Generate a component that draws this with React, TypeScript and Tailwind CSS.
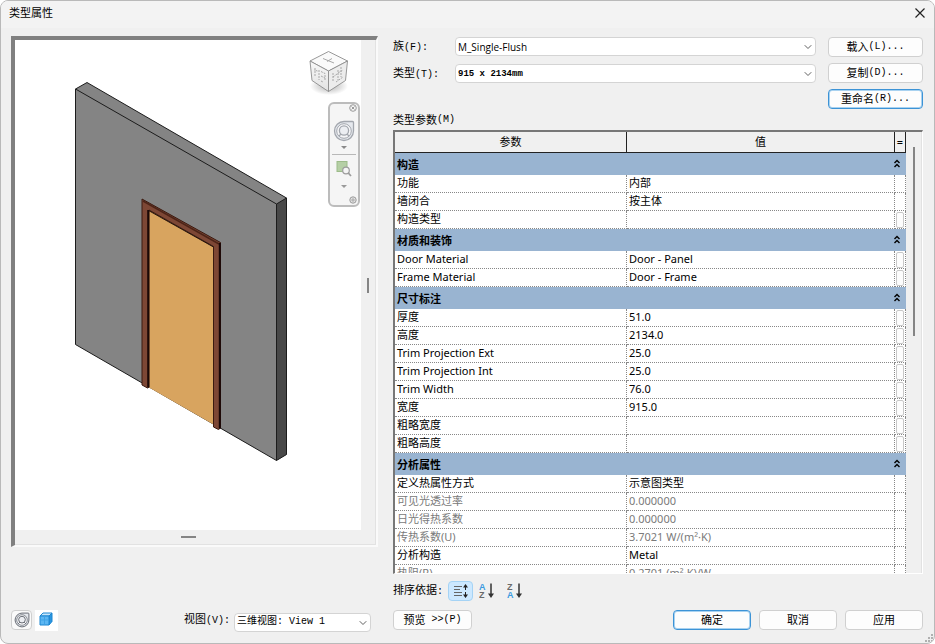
import React from 'react';
import { ChevronDown } from 'lucide-react';

type Row = { name: string; value: string; browse?: boolean; muted?: boolean };
type Group = { title: string; rows: Row[] };

const groups: Group[] = [
  {
    title: '构造',
    rows: [
      { name: '功能', value: '内部' },
      { name: '墙闭合', value: '按主体' },
      { name: '构造类型', value: '', browse: true },
    ],
  },
  {
    title: '材质和装饰',
    rows: [
      { name: 'Door Material', value: 'Door - Panel', browse: true },
      { name: 'Frame Material', value: 'Door - Frame', browse: true },
    ],
  },
  {
    title: '尺寸标注',
    rows: [
      { name: '厚度', value: '51.0', browse: true },
      { name: '高度', value: '2134.0', browse: true },
      { name: 'Trim Projection Ext', value: '25.0', browse: true },
      { name: 'Trim Projection Int', value: '25.0', browse: true },
      { name: 'Trim Width', value: '76.0', browse: true },
      { name: '宽度', value: '915.0', browse: true },
      { name: '粗略宽度', value: '', browse: true },
      { name: '粗略高度', value: '', browse: true },
    ],
  },
  {
    title: '分析属性',
    rows: [
      { name: '定义热属性方式', value: '示意图类型' },
      { name: '可见光透过率', value: '0.000000', muted: true },
      { name: '日光得热系数', value: '0.000000', muted: true },
      { name: '传热系数(U)', value: '3.7021 W/(m²·K)', muted: true },
      { name: '分析构造', value: 'Metal' },
      { name: '热阻(R)', value: '0.2701 (m²·K)/W', muted: true },
    ],
  },
];

function Mono({ children }: { children: React.ReactNode }) {
  return <span className="font-['Liberation_Mono',monospace] text-[10px]">{children}</span>;
}

function PushButton({
  children,
  primary = false,
  className = '',
}: {
  children: React.ReactNode;
  primary?: boolean;
  className?: string;
}) {
  const edge = primary ? 'border-[#3c93d6] shadow-[inset_0_0_0_1px_#a9d2f0]' : 'border-[#d0d0d0]';
  return (
    <button
      type="button"
      className={`flex h-5 items-center justify-center whitespace-pre rounded border bg-[#fdfdfd] leading-4 ${edge} ${className}`}
    >
      {children}
    </button>
  );
}

function SelectBox({
  id,
  value,
  className,
  textClass,
}: {
  id: string;
  value: string;
  className: string;
  textClass: string;
}) {
  return (
    <div className={`relative ${className}`}>
      <select
        id={id}
        defaultValue={value}
        className={`block h-[19px] w-full appearance-none rounded-sm border border-[#d4d4d4] bg-white pr-5 pl-0.5 leading-4 ${textClass}`}
      >
        <option value={value}>{value}</option>
      </select>
      <ChevronDown
        className="pointer-events-none absolute top-1 right-0.5 size-3 text-[#606060]"
        strokeWidth={2}
      />
    </div>
  );
}

function CollapseIcon() {
  return (
    <svg viewBox="0 0 8 9" className="h-[9px] w-2" fill="none" stroke="#000" strokeWidth="1.4">
      <path d="M1.500 4 4 1.500 6.500 4M1.500 8 4 5.500 6.500 8" />
    </svg>
  );
}

function WheelIcon({ className, stroke }: { className: string; stroke: string }) {
  return (
    <svg viewBox="0 0 22 22" className={className} fill="none" stroke={stroke} strokeWidth="1.3">
      <path d="M11 1.5H19.5Q20.5 1.5 20.5 2.5V11A9.5 9.5 0 1 1 11 1.5Z" fill="#e6e9ee" />
      <circle cx="11" cy="11" r="7.300" fill="#f6f6f8" strokeWidth="1" />
      <circle cx="11" cy="10.5" r="4.6" fill="#eceef2" />
      <path d="M8 14 5.8 16.2M14 14 16.2 16.2" />
    </svg>
  );
}

function DoorScene() {
  return (
    <svg viewBox="15 40 346 490" width="346" height="490" role="img" aria-label="三维预览">
      <defs>
        <linearGradient id="cubeLeft" x1="0" y1="0" x2="0" y2="1">
          <stop offset="0" stopColor="#f8f8f8" />
          <stop offset="1" stopColor="#e2e2e2" />
        </linearGradient>
        <radialGradient id="cubeShadow">
          <stop offset="0" stopColor="#b0b0b0" />
          <stop offset="1" stopColor="#ffffff" />
        </radialGradient>
      </defs>
      <g strokeLinejoin="round">
        <path d="M75.5 89 87 82.5 286.5 198V454.5L276.5 460.5 75.5 344.5Z" fill="#848484" />
        <path d="M276.5 204 286.5 198V454.5L276.5 460.5Z" fill="#484848" />
        <path
          d="M75.5 89 87 82.5 286.5 198V454.5L276.5 460.5 75.5 344.5ZM75.5 89 276.5 204V460.5M276.5 204 286.5 198"
          fill="none"
          stroke="#1c1c1c"
          strokeWidth="1"
        />
        <path d="M149 210.5 213.5 247V424.5L149 387.500Z" fill="#d8a45f" />
        <path
          d="M142 199 220.5 242.5V428L218.5 429.5 213.5 427V246.500L149 210V387L147.500 388 142 385Z"
          fill="#7d4735"
          stroke="#3a1a10"
          strokeWidth="1"
        />
        <path d="M148.5 210.500 213.500 247" stroke="#2a160c" strokeWidth="1" />
        <path d="M148.2 210V387.5" stroke="#1b0807" strokeWidth="2" />
        <path d="M143 201 219 244" stroke="#4d2418" strokeWidth="1.5" />
        <path d="M219.8 243V428.5" stroke="#180606" strokeWidth="2" />
      </g>
      <ellipse cx="329" cy="86" rx="19" ry="9" fill="url(#cubeShadow)" />
      <g stroke="#8c8c8c" strokeWidth="0.9" strokeLinejoin="round">
        <path d="M310 61 328.5 51.5 347.5 61 328.5 71Z" fill="#fafafa" />
        <path d="M310 61 328.5 71V91.5L312 80.5Z" fill="url(#cubeLeft)" />
        <path d="M347.5 61 328.5 71V91.5L345.5 80.5Z" fill="#ececec" />
      </g>
      <g stroke="#a8a8a8" strokeWidth="1" fill="none">
        <path d="M323 58.5 334 63M327 61.5 332 58.5" />
        <path d="M315 68V77M317.500 71 314 70M319 70V80M321 71.500 325 73.500V81M321 76 325 78M321 81 323 82" strokeDasharray="2 1" />
        <path d="M333 73V82M333 77 337 74M338 70V80M341 67V77M338 73 343 70M336 82 343 77" strokeDasharray="2 1" />
      </g>
    </svg>
  );
}

function NavigationBar() {
  return (
    <div className="absolute top-[62px] left-[313px] flex h-[105px] w-8 flex-col items-center rounded-md border-2 border-[#bcbcbc] bg-[#f5f5f5]">
      <button type="button" aria-label="关闭导航栏" className="mr-px flex h-2 items-center self-end">
        <svg viewBox="0 0 8 8" className="size-2" fill="none" stroke="#9a9a9a" strokeWidth="1">
          <circle cx="4" cy="4" r="3.300" />
          <path d="M2.500 2.500 5.500 5.500M5.500 2.500 2.500 5.500" />
        </svg>
      </button>
      <button type="button" aria-label="控制盘" className="mt-2">
        <WheelIcon className="size-[22px]" stroke="#a3a7ae" />
      </button>
      <svg viewBox="0 0 6 4" className="mt-1 h-1 w-1.5" fill="#8a8a8a">
        <path d="M0 0H6L3 3Z" />
      </svg>
      <div className="mt-1 h-px w-6 bg-[#b8b8b8]" />
      <button type="button" aria-label="缩放" className="mt-1.5">
        <svg viewBox="0 0 16 16" className="size-4" fill="none">
          <rect x="1" y="0.500" width="10" height="10" fill="#b5cfa5" stroke="#9cbb89" />
          <circle cx="10" cy="9.500" r="3.300" fill="#f5f5f5" stroke="#9c9c9c" strokeWidth="1.200" />
          <path d="M12.300 12 15 15" stroke="#9c9c9c" strokeWidth="1.800" />
        </svg>
      </button>
      <svg viewBox="0 0 6 4" className="mt-2 h-1 w-1.5" fill="#9a9a9a">
        <path d="M0 0H6L3 3Z" />
      </svg>
      <svg viewBox="0 0 8 8" className="mt-auto mr-px mb-px size-2 self-end" fill="#e4e4e4" stroke="#9a9a9a">
        <circle cx="4" cy="4" r="3.200" />
        <path d="M3 3H5V5H3Z" fill="none" strokeWidth="0.700" />
      </svg>
    </div>
  );
}

function PreviewPane() {
  return (
    <section className="flex w-[367px] shrink-0 flex-col">
      <div className="mb-[61px] flex min-h-0 flex-1 border-t-4 border-r-2 border-b-2 border-l-4 border-t-[#808080] border-r-[#fafafa] border-b-[#fafafa] border-l-[#808080]">
        <div className="flex min-w-0 flex-1 flex-col border-r border-b border-[#e2e2e2]">
          <div className="flex min-h-0 flex-1">
            <div className="relative min-w-0 flex-1 overflow-hidden bg-white">
              <DoorScene />
              <NavigationBar />
            </div>
            <div className="flex w-3.5 items-center justify-center">
              <div className="h-[15px] w-0.5 bg-[#858585]" />
            </div>
          </div>
          <div className="flex h-3.5 items-center justify-center pr-3.5">
            <div className="h-0.5 w-[15px] bg-[#858585]" />
          </div>
        </div>
      </div>
      <div className="flex h-6 items-center">
        <button
          type="button"
          aria-label="控制盘"
          className="flex h-5 w-[21px] items-center justify-center rounded border border-[#cfcfcf] bg-[#fafafa]"
        >
          <WheelIcon className="size-4" stroke="#62676f" />
        </button>
        <button type="button" aria-label="视觉样式" className="ml-[3px] flex h-[21px] w-[23px] items-center justify-center bg-white pr-0.5 pb-0.5">
          <svg viewBox="0 0 14 14" className="size-3.5" stroke="#1c86d1" strokeWidth="1" strokeLinejoin="round">
            <path d="M1 4 4 1H13L10 4Z" fill="#c6e6fb" />
            <path d="M10 4 13 1V9.500L10 13Z" fill="#2b95e0" />
            <path d="M1 4H10V13H1Z" fill="#5cb6f2" />
            <path d="M1.500 8H9.500M5.500 4.500V12.500" stroke="#3fa3e6" />
          </svg>
        </button>
        <label htmlFor="view" className="ml-auto w-[50px]">
          视图<Mono>(V):</Mono>
        </label>
        <SelectBox
          id="view"
          value="三维视图: View 1"
          className="mt-1 mr-[7px] w-[137px]"
          textClass="font-['Liberation_Mono','Noto_Sans_CJK_SC',monospace] text-[10px]"
        />
      </div>
    </section>
  );
}

const cell = 'h-[18px] border-r border-b border-dotted border-[#888] p-0';

function ParameterTable() {
  return (
    <div className="flex min-h-0 flex-1 overflow-hidden border-t-2 border-r border-b border-l-2 border-t-[#777] border-r-[#fff] border-b-[#fff] border-l-[#777]">
      <div className="min-w-0 flex-1 overflow-hidden">
        <table aria-labelledby="params-label" className="w-full table-fixed border-separate border-spacing-0 bg-white">
          <colgroup>
            <col className="w-[232px]" />
            <col />
            <col className="w-[11px]" />
          </colgroup>
          <thead>
            <tr className="h-[21px] bg-[#f0f0f0]">
              <th className="border-r border-b border-[#222] p-0 font-normal">参数</th>
              <th className="border-r border-b border-[#222] p-0 font-normal">值</th>
              <th className="border-r border-b border-[#222] p-0 font-normal">=</th>
            </tr>
          </thead>
          {groups.map((group) => (
            <tbody key={group.title}>
              <tr className="h-[22px] bg-[#99b4d1]">
                <th colSpan={3} className="p-0 pr-[5px] pl-0.5 text-left font-bold">
                  <div className="flex h-[22px] items-center justify-between pt-0.5">
                    {group.title}
                    <button type="button" aria-label={`折叠${group.title}`} className="mb-1">
                      <CollapseIcon />
                    </button>
                  </div>
                </th>
              </tr>
              {group.rows.map((row) => (
                <tr key={row.name} className={row.muted ? 'text-[#7a7a7a]' : ''}>
                  <td className={`${cell} pb-0.5 pl-0.5 leading-[14px] whitespace-nowrap`}>{row.name}</td>
                  <td className={`${cell} pb-0.5 pl-0.5 leading-[14px] whitespace-nowrap`}>{row.value}</td>
                  <td className={cell}>
                    {row.browse && (
                      <button
                        type="button"
                        aria-label={`浏览${row.name}`}
                        className="ml-px block h-4 w-2 rounded-xs border border-[#c8c8c8] bg-[#fdfdfd]"
                      />
                    )}
                  </td>
                </tr>
              ))}
            </tbody>
          ))}
        </table>
      </div>
      <div className="flex w-4 justify-center border-r border-[#e2e2e2] pt-[15px]">
        <div className="h-[189px] w-0.5 bg-[#858585]" />
      </div>
    </div>
  );
}

function SortIcon({ top, bottom, blueTop }: { top: string; bottom: string; blueTop: boolean }) {
  return (
    <svg viewBox="0 0 16 18" className="h-[18px] w-4">
      <g className="font-['Liberation_Sans',sans-serif] text-[9px] font-bold">
        <text x="0" y="8" fill={blueTop ? '#3b9be0' : '#6a6a6a'}>{top}</text>
        <text x="0" y="16" fill={blueTop ? '#6a6a6a' : '#3b9be0'}>{bottom}</text>
      </g>
      <path d="M12 1.500V13" stroke="#333" strokeWidth="1.500" />
      <path d="M9 11.500H15L12 16Z" fill="#333" />
    </svg>
  );
}

export default function App() {
  return (
    <main className="relative flex h-screen min-h-[400px] flex-col overflow-hidden rounded-lg border border-[#b9b9b9] bg-[#f0f0f0] font-['Noto_Sans','Noto_Sans_CJK_SC',sans-serif] text-[11px] leading-4 text-black">
      <header className="flex h-[27px] shrink-0 items-center justify-between bg-[#f3f3f3] px-2 pb-[3px]">
        <h1>类型属性</h1>
        <button type="button" aria-label="关闭" className="size-3">
          <svg viewBox="0 0 12 12" className="size-3" stroke="#222" strokeWidth="1.200">
            <path d="M1.500 1.500 10.500 10.500M10.500 1.500 1.500 10.500" />
          </svg>
        </button>
      </header>

      <div className="flex min-h-0 flex-1 gap-[15px] pt-2 pr-[11px] pb-[11px] pl-2.5">
        <PreviewPane />

        <section className="flex min-w-0 flex-1 flex-col">
          <div className="flex gap-3 pt-px">
            <div className="flex min-w-0 flex-1 flex-col gap-2">
              <div className="flex items-center">
                <label htmlFor="family" className="w-[62px]">
                  族<Mono>(F):</Mono>
                </label>
                <SelectBox id="family" value="M_Single-Flush" className="flex-1" textClass="font-['Open_Sans',sans-serif] text-[10px]" />
              </div>
              <div className="flex items-center">
                <label htmlFor="type" className="w-[62px]">
                  类型<Mono>(T):</Mono>
                </label>
                <SelectBox
                  id="type"
                  value="915 x 2134mm"
                  className="flex-1"
                  textClass="font-['Liberation_Mono',monospace] text-[9px] font-bold"
                />
              </div>
            </div>
            <div className="flex w-[95px] flex-col gap-1.5">
              <PushButton>载入<Mono>(L)...</Mono></PushButton>
              <PushButton>复制<Mono>(D)...</Mono></PushButton>
              <PushButton primary>重命名<Mono>(R)...</Mono></PushButton>
            </div>
          </div>

          <h2 id="params-label" className="flex h-[21px] items-center">
            类型参数<Mono>(M)</Mono>
          </h2>
          <ParameterTable />

          <div className="flex h-[34px] shrink-0 items-center">
            <span className="w-[55px]">
              排序依据<Mono>:</Mono>
            </span>
            <button
              type="button"
              aria-label="默认顺序"
              className="flex h-5 w-[25px] items-center justify-center rounded-sm border border-[#a5d3f5] bg-[#cce8ff]"
            >
              <svg viewBox="0 0 16 16" className="size-4" fill="none" stroke="#666" strokeWidth="1">
                <path d="M1 3.500H9M1 6.500H7M1 9.500H9M1 12.500H9" />
                <path d="M12.500 2V7M12.500 9V14" stroke="#222" />
                <path d="M10 4.500 12.500 1 15 4.500ZM10 11.500 12.500 15 15 11.500Z" fill="#222" stroke="none" />
              </svg>
            </button>
            <button type="button" aria-label="升序" className="ml-1.5">
              <SortIcon top="A" bottom="Z" blueTop />
            </button>
            <button type="button" aria-label="降序" className="ml-3">
              <SortIcon top="Z" bottom="A" blueTop={false} />
            </button>
          </div>

          <div className="flex h-6 shrink-0 items-center gap-2">
            <PushButton className="mr-auto w-[79px]">
              预览<Mono> &gt;&gt;(P)</Mono>
            </PushButton>
            <PushButton primary className="w-[78px]">确定</PushButton>
            <PushButton className="w-[78px]">取消</PushButton>
            <PushButton className="w-[78px]">应用</PushButton>
          </div>
        </section>
      </div>

      <svg viewBox="0 0 9 9" className="absolute right-0 bottom-0 size-[9px]" fill="#b0b0b0">
        <path d="M6 0H8V2H6ZM6 3H8V5H6ZM3 3H5V5H3ZM6 6H8V8H6ZM3 6H5V8H3ZM0 6H2V8H0Z" />
      </svg>
    </main>
  );
}
